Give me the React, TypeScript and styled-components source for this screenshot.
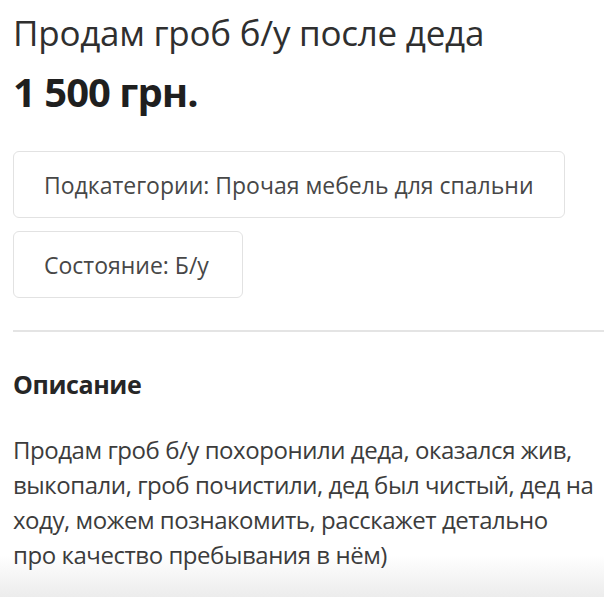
import React from "react";
import styled, { createGlobalStyle } from "styled-components";

const GlobalStyle = createGlobalStyle`
  html, body {
    margin: 0;
    padding: 0;
  }
  body {
    min-height: 597px;
    background: linear-gradient(to bottom, #ffffff 0%, #ffffff 93%, #ececec 100%);
    font-family: "Open Sans", "Noto Sans", sans-serif;
    color: #333333;
  }
`;

interface IChip {
  key: number;
  label: string;
}

const chips: IChip[] = [
  { key: 1, label: "Подкатегории: Прочая мебель для спальни" },
  { key: 2, label: "Состояние: Б/у" },
];

const descriptionLines: string[] = [
  "Продам гроб б/у похоронили деда, оказался жив,",
  "выкопали, гроб почистили, дед был чистый, дед на",
  "ходу, можем познакомить, расскажет детально",
  "про качество пребывания в нём)",
];

export default function App() {
  return (
    <>
      <GlobalStyle />
      <S.Page>
        <S.Header>
          <S.Title>Продам гроб б/у после деда</S.Title>
          <S.Price>1 500 грн.</S.Price>
        </S.Header>
        <S.ChipList>
          {chips.map((chip) => (
            <S.Chip key={chip.key}>{chip.label}</S.Chip>
          ))}
        </S.ChipList>
        <S.Divider />
        <S.Section>
          <S.SectionTitle>Описание</S.SectionTitle>
          <S.Description>
            {descriptionLines.map((line) => (
              <S.Line key={line}>{line}</S.Line>
            ))}
          </S.Description>
        </S.Section>
      </S.Page>
    </>
  );
}

const S = {
  Page: styled.div`
    display: flex;
    flex-direction: column;
    padding: 11px 0 0 13px;
  `,
  Header: styled.div`
    display: flex;
    flex-direction: column;
    gap: 13px;
  `,
  Title: styled.h1`
    margin: 0;
    font-size: 35px;
    line-height: 44px;
    font-weight: 400;
    color: #2f2f2f;
    letter-spacing: -0.25px;
  `,
  Price: styled.div`
    font-size: 40px;
    line-height: 48px;
    font-weight: 700;
    color: #1f1f1f;
    letter-spacing: -1px;
  `,
  ChipList: styled.div`
    display: flex;
    flex-direction: column;
    align-items: flex-start;
    gap: 13px;
    margin-top: 35px;
  `,
  Chip: styled.div`
    display: flex;
    align-items: center;
    box-sizing: border-box;
    height: 67px;
    padding: 0 30px;
    min-width: 230px;
    border: 1px solid #e2e2e2;
    border-radius: 6px;
    font-size: 23px;
    color: #474747;
    white-space: nowrap;
    &:first-child {
      width: 552px;
    }
  `,
  Divider: styled.hr`
    margin: 32px 0 0 0;
    border: none;
    border-top: 2px solid #e4e4e4;
    width: 100%;
  `,
  Section: styled.div`
    display: flex;
    flex-direction: column;
    gap: 33px;
    margin-top: 37px;
  `,
  SectionTitle: styled.h2`
    margin: 0;
    font-size: 25px;
    line-height: 30px;
    font-weight: 700;
    color: #262626;
    letter-spacing: -0.4px;
  `,
  Description: styled.p`
    margin: 0;
    display: flex;
    flex-direction: column;
    font-size: 24px;
    line-height: 35px;
    color: #3c3c3c;
    letter-spacing: -0.45px;
  `,
  Line: styled.span`
    white-space: nowrap;
  `,
};
